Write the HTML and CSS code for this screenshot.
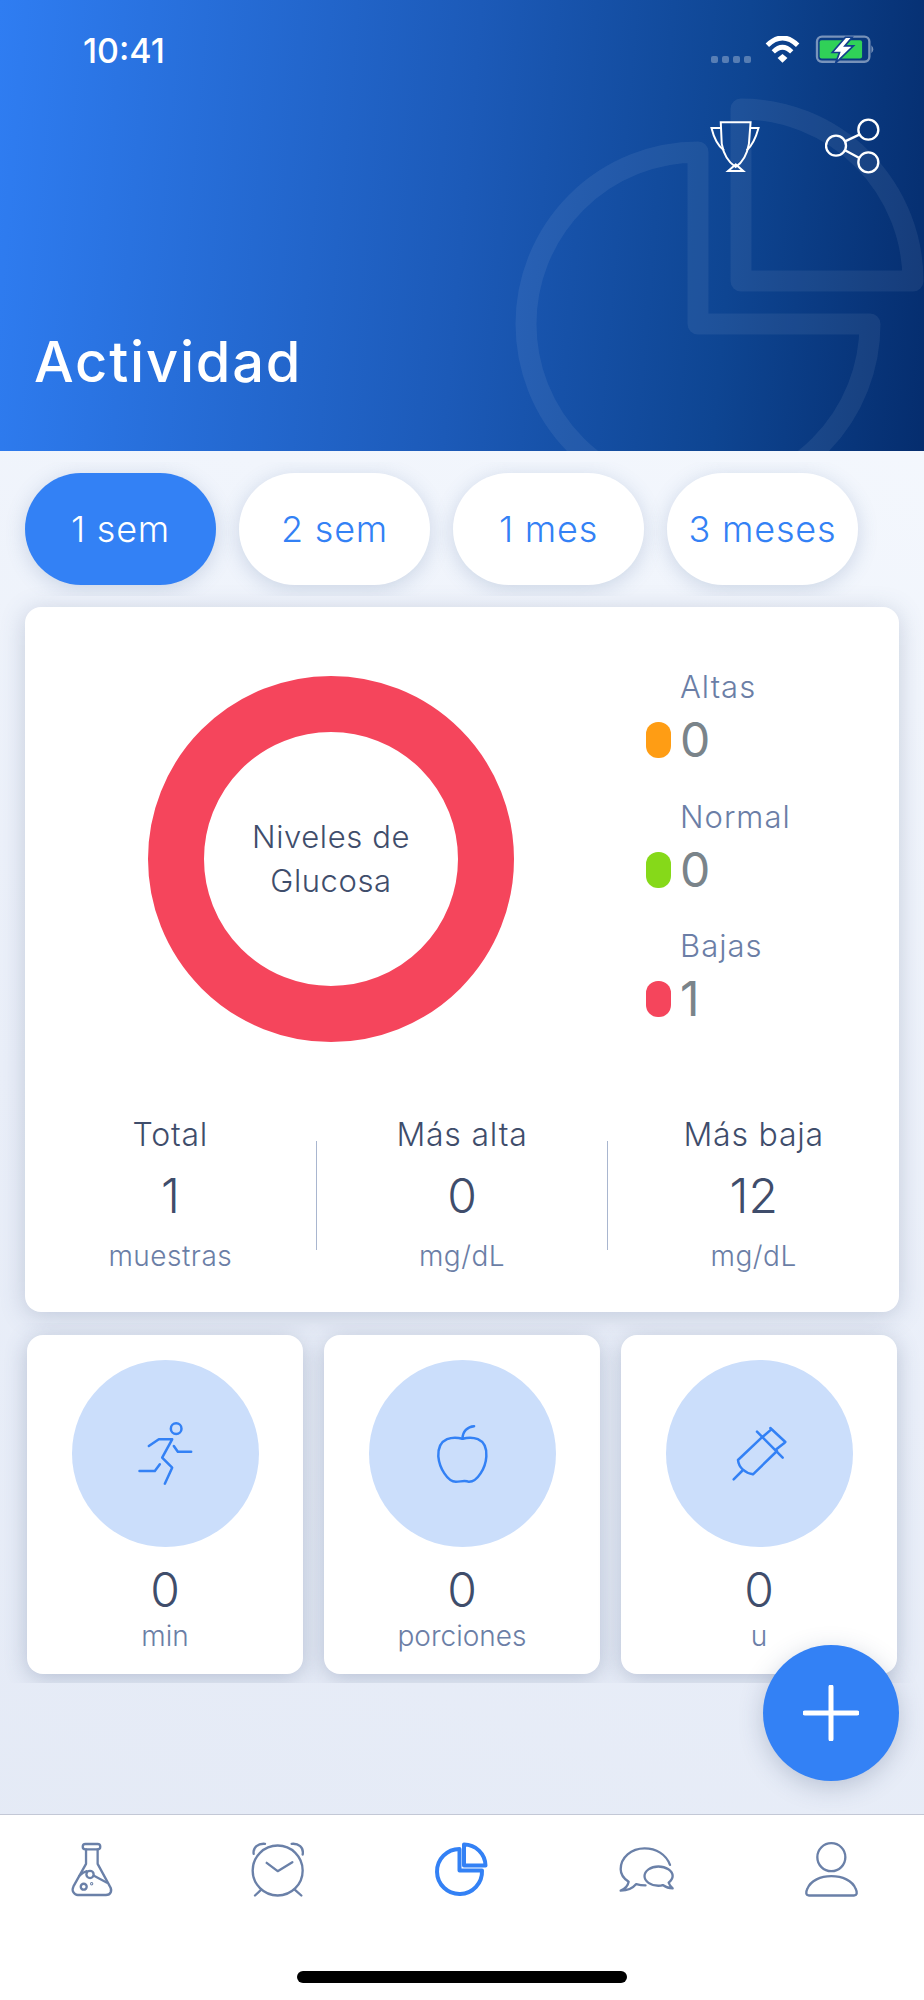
FILE: index.html
```html
<!DOCTYPE html>
<html lang="es">
<head>
    <meta charset="UTF-8">
    <meta name="viewport" content="width=device-width, initial-scale=1.0">
    <title>Actividad</title>
    <link rel="stylesheet" href="styles.css">
</head>
<body>
<div class="screen">
    <header class="top">
        <svg class="watermark" viewBox="0 0 924 451">
            <path d="M698 152V324H870A172 172 0 1 1 698 152Z"/>
            <path d="M741 109V281H913A172 172 0 0 0 741 109Z"/>
        </svg>
        <div class="status">
            <span class="time">10:41</span>
            <div class="status-icons">
                <div class="signal"><i></i><i></i><i></i><i></i></div>
                <svg class="wifi" viewBox="320 80 110 82">
                    <path d="M329 108Q375 64 421 108" fill="none" stroke="#fff" stroke-width="15"/>
                    <path d="M347 128Q375 100 403 128" fill="none" stroke="#fff" stroke-width="14"/>
                    <path d="M360 147L375 135L390 147L375 161Z" fill="#fff"/>
                </svg>
                <svg class="battery" viewBox="468 78 184 86">
                    <rect x="474" y="82" width="158" height="76" rx="15" fill="none" stroke="#fff" stroke-opacity=".45" stroke-width="7"/>
                    <rect x="482" y="93" width="128" height="55" rx="6" fill="#30d158"/>
                    <path d="M638 108Q650 120 638 132Z" fill="#fff" fill-opacity=".45"/>
                    <path d="M560 84L520 130H542L530 162L584 110H558L580 84Z" fill="#fff" stroke="#123f8c" stroke-width="5"/>
                </svg>
            </div>
        </div>
        <div class="top-actions">
            <svg class="trophy" viewBox="148 328 150 160">
                <path d="M180 335H270L265 400C258 440 240 460 225 470C210 460 190 440 183 400Z"/>
                <path d="M180 352H152C160 385 170 405 190 420M270 352H294C285 385 275 405 258 420"/>
                <path d="M225 462L202 482H248Z"/>
            </svg>
            <svg class="share" viewBox="495 325 165 168">
                <circle cx="625" cy="360" r="30"/>
                <circle cx="528" cy="408" r="30"/>
                <circle cx="625" cy="458" r="30"/>
                <path d="M555 395L598 375M555 422L598 445"/>
            </svg>
        </div>
        <h1 class="title">Actividad</h1>
    </header>

    <main class="content">
        <div class="tabs">
            <button class="tab active">1 sem</button>
            <button class="tab">2 sem</button>
            <button class="tab">1 mes</button>
            <button class="tab">3 meses</button>
        </div>

        <section class="card">
            <div class="chart-row">
                <div class="donut">Niveles de<br>Glucosa</div>
                <div class="legend">
                    <div class="legend-item">
                        <div class="legend-label">Altas</div>
                        <div class="legend-value"><i class="dot high"></i>0</div>
                    </div>
                    <div class="legend-item">
                        <div class="legend-label">Normal</div>
                        <div class="legend-value"><i class="dot normal"></i>0</div>
                    </div>
                    <div class="legend-item">
                        <div class="legend-label">Bajas</div>
                        <div class="legend-value"><i class="dot low"></i>1</div>
                    </div>
                </div>
            </div>
            <div class="stats">
                <div class="stat">
                    <div class="stat-label">Total</div>
                    <div class="stat-value">1</div>
                    <div class="stat-unit">muestras</div>
                </div>
                <div class="divider"></div>
                <div class="stat">
                    <div class="stat-label">Más alta</div>
                    <div class="stat-value">0</div>
                    <div class="stat-unit">mg/dL</div>
                </div>
                <div class="divider"></div>
                <div class="stat">
                    <div class="stat-label">Más baja</div>
                    <div class="stat-value">12</div>
                    <div class="stat-unit">mg/dL</div>
                </div>
            </div>
        </section>

        <div class="minis">
            <div class="mini">
                <div class="mini-icon">
                    <svg class="run" viewBox="50 60 170 195">
                        <circle cx="167" cy="83" r="16"/>
                        <path d="M85 135L115 115H155L125 170L155 200L133 248"/>
                        <path d="M118 190L103 210H57"/>
                        <path d="M160 135L172 152H212"/>
                    </svg>
                </div>
                <div class="mini-value">0</div>
                <div class="mini-unit">min</div>
            </div>
            <div class="mini">
                <div class="mini-icon">
                    <svg class="apple" viewBox="945 68 160 180">
                        <path d="M1025 112C1000 105 950 105 952 165C955 200 980 242 1005 242C1020 242 1030 236 1045 242C1070 242 1095 200 1097 165C1100 105 1050 105 1025 112Z"/>
                        <path d="M1025 112C1025 90 1040 75 1060 74"/>
                    </svg>
                </div>
                <div class="mini-value">0</div>
                <div class="mini-unit">porciones</div>
            </div>
            <div class="mini">
                <div class="mini-icon">
                    <svg class="syringe" viewBox="395 80 165 165">
                        <path d="M413 182L487 112M458 225L530 155M413 182C415 205 435 222 458 225"/>
                        <path d="M425 215L400 240M470 97L547 175M510 86L555 128M490 110L513 90M528 150L553 130"/>
                    </svg>
                </div>
                <div class="mini-value">0</div>
                <div class="mini-unit">u</div>
            </div>
        </div>

        <button class="fab">
            <svg viewBox="0 0 56 56"><path d="M28 2V54M2 28H54"/></svg>
        </button>
    </main>

    <nav class="nav">
        <div class="nav-items">
            <a class="nav-item">
                <svg class="flask" viewBox="212 124 132 166">
                    <rect x="250" y="130" width="53" height="16" rx="8"/>
                    <path d="M260 146V190L222 258C215 272 225 284 235 284H320C335 284 340 270 332 258L295 190V146"/>
                    <path d="M240 226C248 218 254 214 262 212M284 226L322 246"/>
                    <circle cx="272" cy="222" r="11"/>
                    <circle cx="253" cy="259" r="9"/>
                    <circle cx="277" cy="250" r="1.5"/>
                </svg>
            </a>
            <a class="nav-item">
                <svg class="clock" viewBox="750 122 165 170">
                    <circle cx="833" cy="210" r="75"/>
                    <path d="M800 187L833 212L877 185"/>
                    <path d="M761 160C758 140 775 128 795 130M875 130C895 128 912 140 908 162"/>
                    <path d="M783 268L765 285M885 268L904 285"/>
                </svg>
            </a>
            <a class="nav-item current">
                <svg class="pie" viewBox="433 1841 57 56">
                    <path d="M459.500 1849V1870.500H482A22.500 22.500 0 1 1 459.500 1849Z"/>
                    <path d="M464 1844.500V1865.500H485.500A21.500 21.500 0 0 0 464 1844.500Z"/>
                </svg>
            </a>
            <a class="nav-item">
                <svg class="chat" viewBox="465 135 172 142">
                    <path d="M622 192C610 160 580 142 545 142C505 142 473 170 473 205C473 222 485 235 497 243C495 255 485 265 473 270C492 270 510 262 520 250C530 253 540 254 548 254"/>
                    <path d="M587 197C610 197 630 210 630 226C630 235 625 240 618 246C620 253 625 258 630 263C618 263 607 258 600 253C595 255 590 255 587 255C563 255 545 242 545 226C545 210 563 197 587 197Z"/>
                </svg>
            </a>
            <a class="nav-item">
                <svg class="person" viewBox="1025 122 165 170">
                    <circle cx="1107" cy="170" r="42"/>
                    <path d="M1040 285H1175C1185 285 1185 275 1180 265C1170 240 1140 227 1107 227C1075 227 1045 240 1035 265C1030 275 1030 285 1040 285Z"/>
                </svg>
            </a>
        </div>
        <div class="home-bar"></div>
    </nav>
</div>
</body>
</html>
```

FILE: styles.css
```css
* {
    box-sizing: border-box;
}
body {
    margin: 0;
    font-family: Inter, "Liberation Sans", sans-serif;
    font-weight: 300;
    color: #3f4d6b;
}
svg {
    display: block;
    fill: none;
}
.screen {
    width: 924px;
    height: 2000px;
    display: flex;
    flex-direction: column;
    overflow: hidden;
    background: linear-gradient(200deg, #f8fbff 0%, #eaeff9 60%, #e3e9f5 100%);
}

/* header */
.top {
    position: relative;
    height: 451px;
    display: flex;
    flex-direction: column;
    overflow: hidden;
    color: #fff;
    background: linear-gradient(95deg, #2f7df2 0%, #1c5ab8 50%, #0e4592 78%, #052d6e 100%);
}
.watermark {
    position: absolute;
    left: 0;
    top: 0;
    width: 924px;
    height: 451px;
    stroke: #fff;
    stroke-opacity: .065;
    stroke-width: 21;
    stroke-linejoin: round;
}
.status {
    position: relative;
    height: 63px;
    padding: 0 48px 0 83px;
    display: flex;
    justify-content: space-between;
    align-items: flex-end;
}
.time {
    font-size: 34px;
    font-weight: 500;
    line-height: 34px;
    margin-bottom: -5px;
}
.status-icons {
    display: flex;
    align-items: flex-end;
}
.signal {
    display: flex;
    gap: 4px;
    margin-right: 13px;
}
.signal i {
    width: 7px;
    height: 7px;
    border-radius: 2px;
    background: rgba(255, 255, 255, .3);
}
.wifi {
    width: 37px;
    height: 27px;
    margin-right: 14px;
}
.battery {
    width: 61px;
    height: 29px;
    margin-bottom: -1px;
}
.top-actions {
    position: relative;
    margin-top: 55px;
    padding-right: 44px;
    display: flex;
    justify-content: flex-end;
    align-items: center;
    gap: 65px;
}
.trophy {
    width: 50px;
    height: 53px;
    stroke: #fff;
    stroke-width: 6;
}
.share {
    width: 55px;
    height: 56px;
    stroke: #fff;
    stroke-width: 7;
}
.title {
    position: relative;
    margin: auto 0 59px 34px;
    font-size: 56px;
    font-weight: 500;
    letter-spacing: 1.800px;
    line-height: 60px;
}

/* body */
.content {
    position: relative;
    flex: 1;
}
.tabs {
    margin-top: 11px;
    height: 134px;
    padding: 11px 25px;
    display: flex;
    gap: 23px;
    overflow: hidden;
}
.tab {
    width: 191px;
    height: 112px;
    padding: 0;
    border: 0;
    border-radius: 56px;
    font: inherit;
    font-size: 36px;
    letter-spacing: .8px;
    color: #3381f5;
    background: #fff;
    box-shadow: 0 4px 20px rgba(70, 100, 150, .22);
}
.tab.active {
    color: #fff;
    background: #3381f5;
}
.card {
    width: 874px;
    height: 705px;
    margin: 11px 0 0 25px;
    padding-top: 60px;
    border-radius: 16px;
    background: #fff;
    box-shadow: 0 4px 24px rgba(70, 90, 130, .25);
}
.chart-row {
    display: flex;
    height: 375px;
}
.donut {
    width: 366px;
    height: 366px;
    margin: 9px 0 0 123px;
    border: 56px solid #f5455c;
    border-radius: 50%;
    display: flex;
    align-items: center;
    justify-content: center;
    text-align: center;
    font-size: 31px;
    letter-spacing: .6px;
    line-height: 44px;
}
.legend {
    margin-left: 132px;
    display: flex;
    flex-direction: column;
    gap: 23.500px;
}
.legend-label {
    padding-left: 34px;
    font-size: 31px;
    letter-spacing: 1px;
    line-height: 40px;
    color: #6b7ea6;
}
.legend-value {
    display: flex;
    align-items: center;
    gap: 9px;
    font-size: 48px;
    font-weight: 400;
    line-height: 66px;
    color: #7a848a;
}
.dot {
    width: 25px;
    height: 36px;
    border-radius: 12px;
}
.dot.high {
    background: #ff9d14;
}
.dot.normal {
    background: #86d919;
}
.dot.low {
    background: #f5455c;
}
.stats {
    margin-top: 73px;
    display: flex;
    text-align: center;
}
.stat {
    flex: 1;
}
.stat-label {
    font-size: 32px;
    letter-spacing: .8px;
    line-height: 40px;
}
.stat-value {
    margin-top: 11px;
    font-size: 48px;
    line-height: 60px;
}
.stat-unit {
    margin-top: 10px;
    font-size: 28px;
    letter-spacing: .5px;
    line-height: 40px;
    color: #6b7ea6;
}
.divider {
    width: 1px;
    height: 109px;
    margin-top: 26px;
    background: #a9b6cf;
}
.minis {
    height: 360px;
    margin-top: 11px;
    padding: 12px 27px 0;
    display: flex;
    gap: 21px;
    overflow: hidden;
}
.mini {
    width: 276px;
    height: 339px;
    padding-top: 25px;
    border-radius: 16px;
    background: #fff;
    text-align: center;
    box-shadow: 0 4px 22px rgba(70, 90, 130, .3);
}
.mini-icon {
    width: 187px;
    height: 187px;
    margin: 0 auto;
    border-radius: 50%;
    background: #cbdefb;
    display: flex;
    align-items: center;
    justify-content: center;
}
.mini-icon svg {
    stroke: #3381f5;
    stroke-width: 7.500;
    stroke-linecap: round;
    stroke-linejoin: round;
}
.run {
    width: 57px;
    height: 65px;
}
.apple {
    width: 53px;
    height: 60px;
}
.syringe {
    width: 55px;
    height: 55px;
}
.mini-value {
    margin-top: 18px;
    font-size: 48px;
    line-height: 50px;
}
.mini-unit {
    margin-top: 3px;
    font-size: 28px;
    line-height: 36px;
    color: #6b7ea6;
}
.fab {
    position: absolute;
    right: 25px;
    bottom: 33px;
    width: 136px;
    height: 136px;
    padding: 0;
    border: 0;
    border-radius: 50%;
    background: #3381f5;
    display: flex;
    align-items: center;
    justify-content: center;
    box-shadow: 0 6px 24px rgba(50, 70, 110, .25);
}
.fab svg {
    width: 56px;
    height: 56px;
    stroke: #fff;
    stroke-width: 5;
    stroke-linecap: round;
}

/* tab bar */
.nav {
    height: 186px;
    border-top: 1px solid #c3c8d6;
    background: #fff;
}
.nav-items {
    height: 108px;
    display: grid;
    grid-template-columns: repeat(5, 1fr);
}
.nav-item {
    display: flex;
    align-items: center;
    justify-content: center;
}
.nav-item svg {
    stroke: #6a80a8;
    stroke-width: 7;
    stroke-linecap: round;
    stroke-linejoin: round;
}
.flask {
    width: 44px;
    height: 55px;
}
.clock,
.person {
    width: 55px;
    height: 57px;
}
.chat {
    width: 57px;
    height: 47px;
}
.nav-item.current svg {
    width: 57px;
    height: 56px;
    stroke: #3381f5;
    stroke-width: 4;
}
.home-bar {
    width: 330px;
    height: 12px;
    margin: 48px auto 0;
    border-radius: 6px;
    background: #000;
}
```
